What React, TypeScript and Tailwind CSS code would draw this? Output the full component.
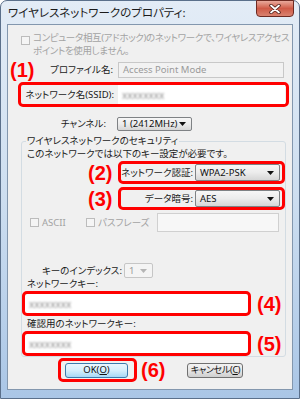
import React from "react";

const font = "font-['Noto_Sans','Noto_Sans_CJK_JP',sans-serif] [font-feature-settings:'palt']";

function Arrow({ disabled }: { disabled?: boolean }) {
  return (
    <svg width="7" height="4" viewBox="0 0 7 4" className="shrink-0">
      <polygon points="0,0 7,0 3.5,4" fill={disabled ? "#b5b5b5" : "#111"} />
    </svg>
  );
}

function Combo({
  value,
  className,
  disabled,
}: {
  value: string;
  className: string;
  disabled?: boolean;
}) {
  return (
    <div
      className={
        "flex items-center justify-between pl-[4px] pr-[5px] rounded-[2px] border text-[9.5px] leading-[12px] " +
        (disabled
          ? "border-[#c6c6c6] bg-[#f4f4f4] text-[#9a9a9a] "
          : "border-[#7f8285] bg-gradient-to-b from-[#f7f7f7] via-[#ececec] to-[#d6d6d6] text-[#111] ") +
        className
      }
    >
      <span>{value}</span>
      <Arrow disabled={disabled} />
    </div>
  );
}

function Check() {
  return <div className="w-[9px] h-[9px] shrink-0 border border-[#bcbcbc] bg-[#f5f5f5]" />;
}

function Note({ n, className = "" }: { n: number; className?: string }) {
  return (
    <span
      className={
        "font-['Liberation_Sans',sans-serif] font-bold text-[20px] leading-[20px] text-[#ff0000] shrink-0 " +
        className
      }
    >
      ({n})
    </span>
  );
}

function Hidden({ className = "" }: { className?: string }) {
  return (
    <span className={"text-[10px] text-[#8a8a8a] blur-[1.3px] select-none " + className}>
      xxxxxxxx
    </span>
  );
}

export default function App() {
  return (
    <div
      className={
        "w-[300px] h-[399px] flex flex-col border border-[#5b708b] rounded-t-[7px] bg-gradient-to-b from-[#e3ecf6] via-[#cddef0] to-[#aac6e6] text-[#1a1a1a] whitespace-nowrap " +
        font
      }
    >
      {/* title bar */}
      <div className="h-[23px] flex items-start justify-between pl-[7px] pr-[5px]">
        <span className="mt-[4px] text-[11.5px] leading-[16px] text-[#1b1b1b]">
          ワイヤレスネットワークのプロパティ:
        </span>
        <button className="-mt-[1px] w-[38px] h-[17px] flex items-center justify-center rounded-b-[4px] border border-[#6d2a22] bg-gradient-to-b from-[#e8a99c] via-[#cf5a47] to-[#d9826f]">
          <svg width="12" height="10" viewBox="0 0 12 10">
            <path d="M2 1.5 L10 8.5 M10 1.5 L2 8.5" stroke="#4a1a14" strokeWidth="3.4" strokeLinecap="round" />
            <path d="M2 1.5 L10 8.5 M10 1.5 L2 8.5" stroke="#fff" strokeWidth="1.8" strokeLinecap="round" />
          </svg>
        </button>
      </div>

      {/* dialog body */}
      <div className="mx-[6px] h-[366px] bg-[#f0f0f0] border border-[#8397ae] flex flex-col text-[9.5px] leading-[12px]">
        {/* ad hoc checkbox */}
        <div className="mt-[6px] flex pl-[13px]">
          <div className="mt-[5px]">
            <Check />
          </div>
          <div className="ml-[3px] leading-[13px] text-[#a3a3a3] tracking-[-0.35px]">
            コンピュータ相互(アドホック)のネットワークで、ワイヤレスアクセス
            <br />
            ポイントを使用しません。
          </div>
        </div>

        {/* profile name */}
        <div className="mt-[5px] h-[16px] flex items-center">
          <div className="w-[105px] pl-[2px] flex items-center justify-between">
            <Note n={1} />
            <span>プロファイル名:</span>
          </div>
          <div className="ml-[5px] w-[166px] h-[16px] border border-[#c8c8c8] bg-[#f2f2f2] flex items-center pl-[4px] text-[#9a9a9a]">
            Access Point Mode
          </div>
        </div>

        {/* SSID */}
        <div className="mt-[4px] ml-[10px] w-[271px] h-[25px] border-[3px] border-[#ff0000] rounded-[5px] flex items-center">
          <span className="w-[93px] text-right">ネットワーク名(SSID):</span>
          <div className="ml-[4px] w-[167px] h-[19px] bg-white flex items-center pl-[4px]">
            <Hidden />
          </div>
        </div>

        {/* channel */}
        <div className="mt-[10px] h-[14px] flex items-center">
          <span className="w-[98px] text-right">チャンネル:</span>
          <Combo value="1 (2412MHz)" className="ml-[11px] w-[75px] h-[14px]" />
        </div>

        {/* security group */}
        <div className="relative mt-[10px] ml-[13px] w-[265px] h-[216px] border border-[#d3dce3] rounded-[3px] flex flex-col">
          <span className="absolute -top-[7px] left-[4px] px-[1px] bg-[#f0f0f0]">
            ワイヤレスネットワークのセキュリティ
          </span>
          <div className="mt-[6px] pl-[5px]">このネットワークでは以下のキー設定が必要です。</div>

          <div className="mt-[1px] flex items-center">
            <Note n={2} className="ml-[66px] w-[24px]" />
            <div className="ml-[6px] w-[169px] h-[23px] border-[3px] border-[#ff0000] rounded-[5px] flex items-center">
              <span className="w-[72px] text-right">ネットワーク認証:</span>
              <Combo value="WPA2-PSK" className="ml-[2px] w-[85px] h-[17px]" />
            </div>
          </div>

          <div className="mt-[3px] flex items-center">
            <Note n={3} className="ml-[66px] w-[24px]" />
            <div className="ml-[6px] w-[169px] h-[23px] border-[3px] border-[#ff0000] rounded-[5px] flex items-center">
              <span className="w-[72px] text-right">データ暗号:</span>
              <Combo value="AES" className="ml-[2px] w-[85px] h-[17px]" />
            </div>
          </div>

          <div className="mt-[3px] h-[19px] flex items-center text-[#a3a3a3]">
            <div className="ml-[8px]">
              <Check />
            </div>
            <span className="ml-[3px] w-[44px]">ASCII</span>
            <Check />
            <span className="ml-[3px] w-[59px]">パスフレーズ</span>
            <div className="w-[122px] h-[19px] border border-[#d0d0d0] bg-[#f7f7f7]" />
          </div>

          <div className="mt-[31px] h-[15px] flex items-center">
            <span className="ml-[20px] w-[75px] text-right">キーのインデックス:</span>
            <Combo value="1" disabled className="ml-[7px] w-[29px] h-[15px]" />
          </div>

          <div className="pl-[5px]">ネットワークキー:</div>
          <div className="mt-[1px] flex items-center">
            <div className="w-[229px] h-[25px] border-[3px] border-[#ff0000] rounded-[5px] bg-white flex items-center pl-[4px]">
              <Hidden />
            </div>
            <Note n={4} className="ml-[6px]" />
          </div>

          <div className="mt-[2px] pl-[5px]">確認用のネットワークキー:</div>
          <div className="mt-[1px] flex items-center">
            <div className="w-[229px] h-[25px] border-[3px] border-[#ff0000] rounded-[5px] bg-white flex items-center pl-[4px]">
              <Hidden />
            </div>
            <Note n={5} className="ml-[6px]" />
          </div>
        </div>

        {/* buttons */}
        <div className="mt-[1px] pl-[50px] flex items-center">
          <div className="w-[79px] h-[24px] border-[3px] border-[#ff0000] rounded-[5px] flex items-center pl-[4px]">
            <button className="w-[63px] h-[15px] rounded-[3px] border border-[#3d7bad] bg-gradient-to-b from-[#eaf6fd] via-[#d5effc] to-[#a7d9f5] text-[9.5px] leading-[12px] text-[#111]">
              OK(<span className="underline">O</span>)
            </button>
          </div>
          <Note n={6} className="ml-[4px]" />
          <button className="ml-[22px] w-[56px] h-[15px] px-0 rounded-[3px] border border-[#707070] bg-gradient-to-b from-[#f2f2f2] via-[#e6e6e6] to-[#cfcfcf] text-[9px] leading-[12px] tracking-[-0.3px] text-[#111]">
            キャンセル(<span className="underline">C</span>)
          </button>
        </div>
      </div>
    </div>
  );
}
